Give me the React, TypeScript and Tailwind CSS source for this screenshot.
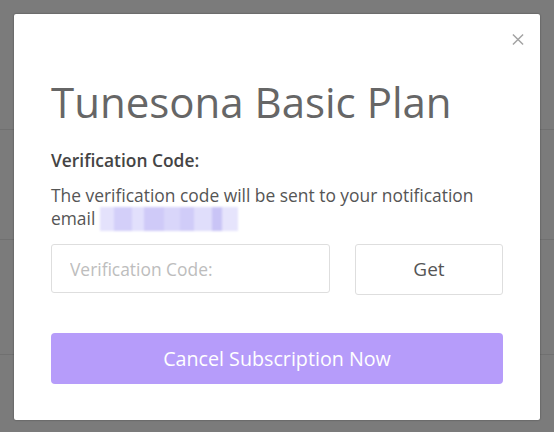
import React from 'react';

// pixelated blur standing in for the masked email address
const blurBlocks = [
  { w: 'w-[14px]', c: 'bg-[#e4e2fc]' },
  { w: 'w-[18px]', c: 'bg-[#d3cff9]' },
  { w: 'w-[12px]', c: 'bg-[#e2e0fc]' },
  { w: 'w-[20px]', c: 'bg-[#cfcaf8]' },
  { w: 'w-[16px]', c: 'bg-[#d9d6fa]' },
  { w: 'w-[14px]', c: 'bg-[#d0ccf8]' },
  { w: 'w-[18px]', c: 'bg-[#e0defb]' },
  { w: 'w-[10px]', c: 'bg-[#c9c4f6]' },
  { w: 'w-[16px]', c: 'bg-[#e6e4fc]' },
];

const MaskedEmail: React.FC = () => (
  <span className="inline-flex align-[-6px] h-[24px] w-[138px] overflow-hidden blur-[1px]">
    {blurBlocks.map((b, i) => (
      <span key={i} className={`${b.w} ${b.c} h-full`} />
    ))}
  </span>
);

export default function App() {
  return (
    <div
      className="relative w-[554px] h-[432px] overflow-hidden bg-[#7b7b7b]"
      style={{ fontFamily: '"Open Sans", "Noto Sans", sans-serif' }}
    >
      {/* dimmed page behind the modal */}
      <div className="flex flex-col">
        <div className="h-[130px] border-b border-[#707070]" />
        <div className="h-[110px] border-b border-[#707070]" />
        <div className="h-[115px] border-b border-[#707070]" />
      </div>

      {/* modal */}
      <div className="absolute left-[14px] top-[14px] w-[526px] h-[406px] bg-white rounded-[2px] shadow-[0_0_2px_rgba(0,0,0,0.45)] px-[37px] pt-[63px]">
        <button className="absolute right-[16px] top-[19px] w-[12px] h-[12px] flex items-center justify-center">
          <svg width="13" height="13" viewBox="0 0 13 13" fill="none">
            <path d="M1 1L12 12M12 1L1 12" stroke="#a3a3a3" strokeWidth="1.6" />
          </svg>
        </button>

        <h1 className="text-[42px] leading-[50px] text-[#666666] font-normal">Tunesona Basic Plan</h1>

        <p className="mt-[21px] text-[17.4px] leading-[24px] font-semibold text-[#444444]">Verification Code:</p>

        <p className="mt-[12px] text-[17.4px] leading-[23px] text-[#555555]">
          The verification code will be sent to your notification email <MaskedEmail />
        </p>

        <div className="mt-[13px] flex items-start justify-between">
          <input
            className="w-[279px] h-[49px] border border-[#dedede] rounded-[3px] px-[18px] text-[17.4px] text-[#555] placeholder:text-[#bdbdbd] outline-none"
            placeholder="Verification Code:"
          />
          <button className="w-[148px] h-[51px] border border-[#dedede] rounded-[3px] text-[19px] text-[#555555]">
            Get
          </button>
        </div>

        <button className="mt-[38px] w-full h-[51px] rounded-[4px] bg-[#b69cfa] text-white text-[19.7px]">
          Cancel Subscription Now
        </button>
      </div>
    </div>
  );
}
